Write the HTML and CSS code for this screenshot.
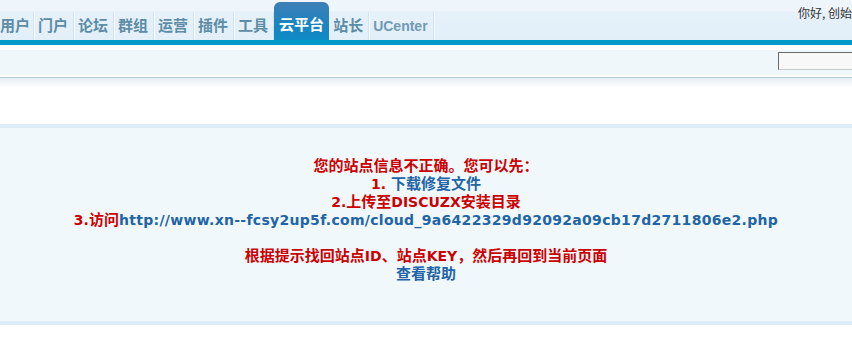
FILE: index.html
```html
<!DOCTYPE html>
<html>
    <head>
        <meta charset="utf-8">
        <title>Discuz! 云平台</title>
        <link rel="stylesheet" href="styles.css">
    </head>
    <body class="body">
        <div class="header">
            <ul class="nav">
                <li><a href="#">用户</a></li>
                <li><a href="#">门户</a></li>
                <li><a href="#">论坛</a></li>
                <li><a href="#">群组</a></li>
                <li><a href="#">运营</a></li>
                <li><a href="#">插件</a></li>
                <li><a href="#">工具</a></li>
                <li class="current"><a href="#">云平台</a></li>
                <li><a href="#">站长</a></li>
                <li class="uc"><a href="#">UCenter</a></li>
            </ul>
            <div class="uinfo">你好, 创始</div>
        </div>
        <div class="bar"></div>
        <div class="subbar">
            <input type="text" class="search">
        </div>
        <div class="shadow"></div>

        <div class="main">
            <p class="msg">您的站点信息不正确。您可以先：</p>
            <p class="msg"><span class="en">1. </span><a href="#">下载修复文件</a></p>
            <p class="msg"><span class="en">2.</span>上传至<span class="en">DISCUZX</span>安装目录</p>
            <p class="msg"><span class="en">3.</span>访问<a href="#" class="url en">http://www.xn--fcsy2up5f.com/cloud_9a6422329d92092a09cb17d2711806e2.php</a></p>
            <p class="msg">&nbsp;</p>
            <p class="msg">根据提示找回站点<span class="en">ID</span>、站点<span class="en">KEY</span>，然后再回到当前页面</p>
            <p class="msg"><a href="#">查看帮助</a></p>
        </div>
    </body>
</html>
```

FILE: styles.css
```css
html,body{
    margin: 0;
    padding: 0;
}
.body{
    width: 852px;
    height: 344px;
    overflow: hidden;
    background: #fff;
    font-family: "DejaVu Sans", "Noto Sans CJK SC", sans-serif;
    font-size: 12px;
}
.header{
    height: 40px;
    display: flex;
    justify-content: space-between;
    background: linear-gradient(#eef5fb 0px, #eef5fb 11px, #e6f1f9 12px, #e2eff9 40px);
}
.nav{
    list-style: none;
    margin: 0;
    padding: 0;
    display: flex;
    align-items: flex-end;
}
.nav li{
    height: 28px;
    padding: 0 5px 0 4px;
    border-right: 1px solid #d3e4ef;
    box-shadow: 1px 0 0 #f4f9fd;
}
.nav li:first-child{
    padding: 0 3px 0 0;
}
.nav a{
    display: block;
    line-height: 28px;
    color: #5d8ca7;
    text-decoration: none;
    font-family: "Liberation Sans", "Noto Sans CJK SC", sans-serif;
    font-weight: bold;
    font-size: 15px;
}
.nav .current{
    height: 38px;
    padding: 0 5px;
    border-right: none;
    box-shadow: none;
    border-radius: 6px 6px 0 0;
    background: linear-gradient(#3f7fb6, #1a84bf 60%, #0f8bc5);
}
.nav .current a{
    color: #fff;
    padding-top: 8px;
    line-height: 30px;
}
.nav .uc a{
    color: #6e9ab4;
    font-size: 14px;
}
.uinfo{
    padding-top: 4px;
    color: #333;
    font-family: "Noto Sans CJK SC", sans-serif;
    font-size: 12px;
    white-space: nowrap;
}
.bar{
    height: 5px;
    background: #0099cc;
}
.subbar{
    margin-top: 5px;
    height: 25px;
    background: #eff7fb;
    display: flex;
    justify-content: flex-end;
}
.search{
    margin: 2px -40px 0 0;
    width: 114px;
    height: 18px;
    box-sizing: border-box;
    border: 1px solid #6a6a6a;
    border-right-color: #ccc;
    border-bottom-color: #c8c8c8;
    background: #f8f8f8;
    padding: 0;
}
.shadow{
    margin-top: 2px;
    height: 10px;
    border-top: 1px solid #b5ccd6;
    background: linear-gradient(#e3eff7, #fff);
}
.main{
    margin-top: 36px;
    height: 201px;
    box-sizing: border-box;
    border-top: 4px solid #ddeef9;
    border-bottom: 4px solid #ddeef9;
    background: #f1f8fc;
    padding-top: 29px;
    text-align: center;
}
.msg{
    margin: 0;
    line-height: 18px;
    color: #cc0000;
    font-weight: bold;
    font-size: 15px;
    font-family: "DejaVu Sans", "Noto Sans CJK SC", sans-serif;
}
.msg .en{
    font-size: 14px;
}
.msg a{
    color: #2264a6;
    text-decoration: none;
}
.msg .url{
    letter-spacing: 0.3px;
}
```
